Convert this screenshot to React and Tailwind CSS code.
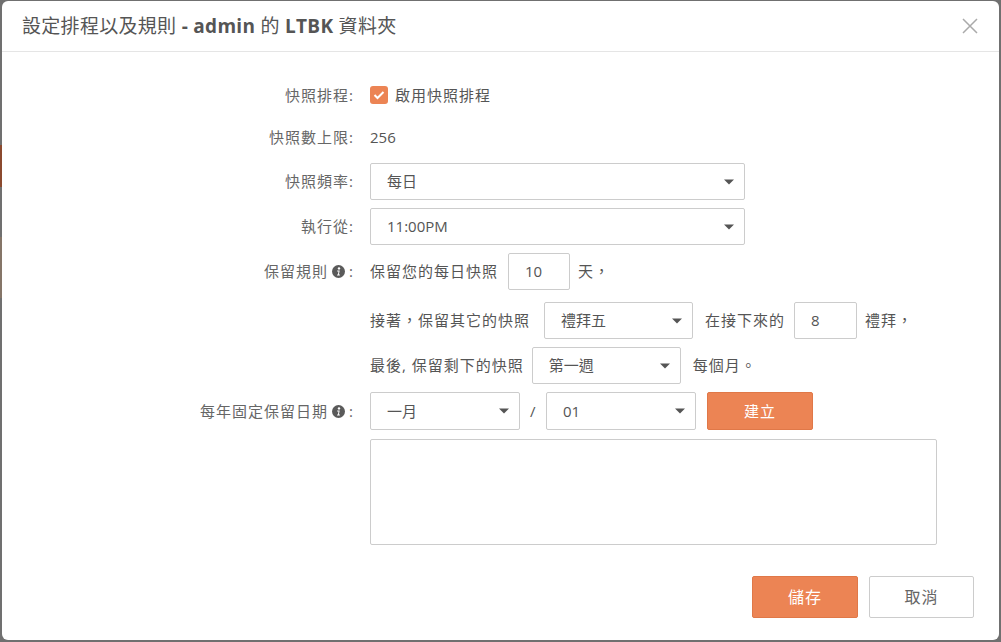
import React, { useState } from 'react';

const font = { fontFamily: '"Open Sans", "Noto Sans CJK TC", sans-serif' };

function Caret() {
    return (
        <svg width="10" height="6" viewBox="0 0 10 6" className="shrink-0">
            <path d="M0 0.5 L10 0.5 L5 5.5 Z" fill="#555" />
        </svg>
    );
}

function Info() {
    return (
        <svg width="13" height="13" viewBox="0 0 13 13" className="inline-block mx-[4px]">
            <circle cx="6.5" cy="6.5" r="6.5" fill="#5a5a5a" />
            <circle cx="7" cy="3.4" r="1.2" fill="#fff" />
            <path d="M5.2 5.6 H7.7 L6.9 9.6 H8 L7.8 10.4 H5 L5.2 9.6 H5.9 L6.5 6.4 H5.1 Z" fill="#fff" />
        </svg>
    );
}

function Select({ value, className = '' }) {
    return (
        <div className={`h-[37px] border border-[#ccc] rounded-[2px] bg-white flex items-center justify-between pl-[16px] pr-[10px] text-[15px] text-[#555] ${className}`}>
            <span>{value}</span>
            <Caret />
        </div>
    );
}

function Box({ value, className = '' }) {
    return (
        <div className={`h-[37px] border border-[#ccc] rounded-[2px] bg-white flex items-center pl-[16px] text-[15px] text-[#555] ${className}`}>
            {value}
        </div>
    );
}

function Row({ label, info, className = '', children }) {
    return (
        <div className={`flex items-center ${className}`}>
            <div className="w-[352px] shrink-0 text-right text-[15px] text-[#666] tracking-[1px] flex items-center justify-end">
                {label && (
                    <>
                        <span>{label}</span>
                        {info && <Info />}
                        <span>:</span>
                    </>
                )}
            </div>
            <div className="pl-[16px] flex items-center text-[15px] text-[#555]">{children}</div>
        </div>
    );
}

export default function App() {
    const [enabled, setEnabled] = useState(true);

    return (
        <div className="w-[1001px] h-[642px] bg-[#707070] flex overflow-hidden" style={font}>
            {/* backdrop peeking at the left edge */}
            <div className="w-[2px] shrink-0 flex flex-col">
                <div className="h-[145px]" />
                <div className="h-[42px] bg-[#8b4a2f]" />
                <div className="h-[50px]" />
                <div className="h-[61px] bg-[#857568]" />
            </div>

            <div className="flex-1 pt-[1px] pr-[2px] pb-[2px]">
                <div className="w-full h-full bg-white rounded-[6px] flex flex-col">
                    {/* Header */}
                    <div className="h-[51px] border-b border-[#e5e5e5] flex items-center justify-between pl-[20px] pr-[21px] shrink-0">
                        <h2 className="text-[19px] text-[#555] tracking-[0.3px]">
                            設定排程以及規則 <span className="font-bold">- admin</span> 的 <span className="font-bold">LTBK</span> 資料夾
                        </h2>
                        <svg width="16" height="16" viewBox="0 0 16 16">
                            <path d="M1 1 L15 15 M15 1 L1 15" stroke="#aaa" strokeWidth="1.5" />
                        </svg>
                    </div>

                    <div className="flex flex-col">
                        <Row label="快照排程" className="mt-[26px] h-[34px]">
                            <button
                                onClick={() => setEnabled(!enabled)}
                                className={`w-[18px] h-[18px] rounded-[3px] flex items-center justify-center ${enabled ? 'bg-[#ec8454]' : 'border border-[#ccc] bg-white'}`}
                            >
                                {enabled && (
                                    <svg width="12" height="10" viewBox="0 0 12 10">
                                        <path d="M1.5 5 L4.5 8 L10.5 2" stroke="#fff" strokeWidth="2" fill="none" />
                                    </svg>
                                )}
                            </button>
                            <span className="ml-[7px] tracking-[1px]">啟用快照排程</span>
                        </Row>

                        <Row label="快照數上限" className="mt-[8px] h-[34px]">
                            <span>256</span>
                        </Row>

                        <Row label="快照頻率" className="mt-[9px] h-[37px]">
                            <Select value="每日" className="w-[375px]" />
                        </Row>

                        <Row label="執行從" className="mt-[8px] h-[37px]">
                            <Select value="11:00PM" className="w-[375px]" />
                        </Row>

                        <Row label="保留規則" info className="mt-[8px] h-[37px]">
                            <span className="tracking-[1px]">保留您的每日快照</span>
                            <Box value="10" className="w-[62px] ml-[10px]" />
                            <span className="ml-[8px] tracking-[1px]">天，</span>
                        </Row>

                        <Row label="" className="mt-[12px] h-[37px]">
                            <span className="tracking-[1px]">接著，保留其它的快照</span>
                            <Select value="禮拜五" className="w-[149px] ml-[14px]" />
                            <span className="ml-[12px] tracking-[1px]">在接下來的</span>
                            <Box value="8" className="w-[63px] ml-[9px]" />
                            <span className="ml-[8px] tracking-[1px]">禮拜，</span>
                        </Row>

                        <Row label="" className="mt-[8px] h-[37px]">
                            <span className="tracking-[1px]">最後, 保留剩下的快照</span>
                            <Select value="第一週" className="w-[149px] ml-[8px]" />
                            <span className="ml-[12px] tracking-[1px]">每個月。</span>
                        </Row>

                        <Row label="每年固定保留日期" info className="mt-[8px] h-[38px]">
                            <Select value="一月" className="w-[150px] h-[38px]" />
                            <span className="mx-[10px] w-[6px]">/</span>
                            <Select value="01" className="w-[150px] h-[38px]" />
                            <button className="ml-[11px] w-[106px] h-[38px] bg-[#ec8454] border border-[#e07848] rounded-[2px] text-white text-[15px] tracking-[1px]">
                                建立
                            </button>
                        </Row>

                        <div className="mt-[9px] pl-[368px]">
                            <textarea className="block w-[567px] h-[106px] border border-[#ccc] rounded-[2px] resize-none outline-none" />
                        </div>

                        <div className="mt-[31px] flex justify-end gap-[11px] pr-[25px]">
                            <button className="w-[106px] h-[42px] bg-[#ec8454] border border-[#e07848] rounded-[2px] text-white text-[16px] tracking-[1px]">
                                儲存
                            </button>
                            <button className="w-[105px] h-[42px] bg-white border border-[#ccc] rounded-[2px] text-[#666] text-[16px] tracking-[1px]">
                                取消
                            </button>
                        </div>
                    </div>
                </div>
            </div>
        </div>
    );
}
